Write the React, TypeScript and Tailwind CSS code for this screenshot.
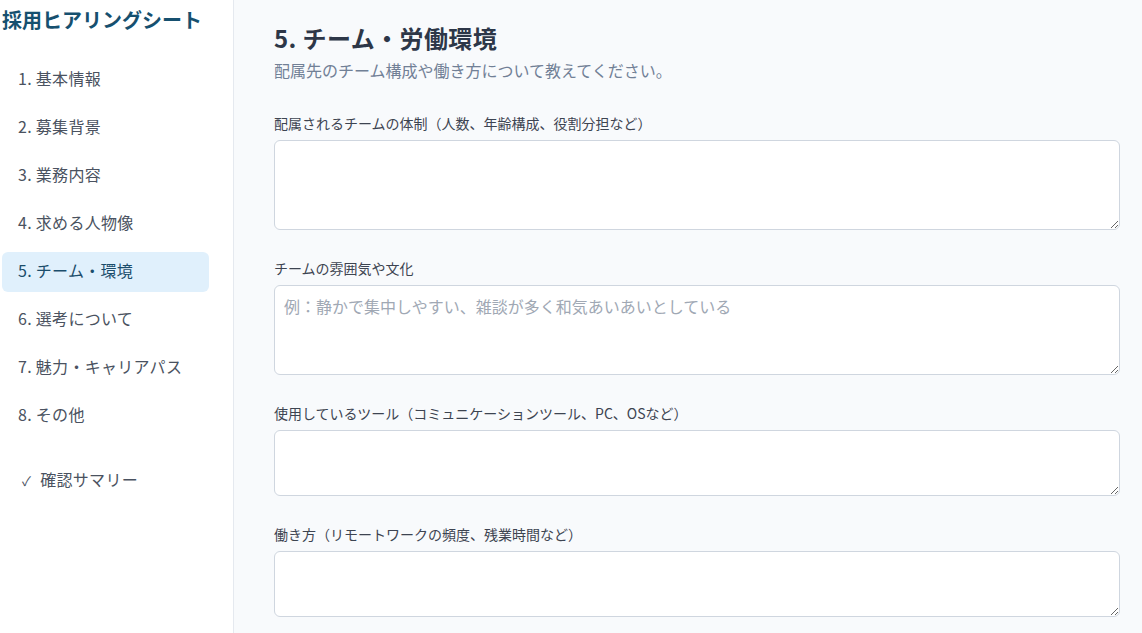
import { useState } from "react";

const sections = [
  "1. 基本情報",
  "2. 募集背景",
  "3. 業務内容",
  "4. 求める人物像",
  "5. チーム・環境",
  "6. 選考について",
  "7. 魅力・キャリアパス",
  "8. その他",
];

const fields = [
  { label: "配属されるチームの体制（人数、年齢構成、役割分担など）", placeholder: "", h: "h-[90px]" },
  { label: "チームの雰囲気や文化", placeholder: "例：静かで集中しやすい、雑談が多く和気あいあいとしている", h: "h-[90px]" },
  { label: "使用しているツール（コミュニケーションツール、PC、OSなど）", placeholder: "", h: "h-[66px]" },
  { label: "働き方（リモートワークの頻度、残業時間など）", placeholder: "", h: "h-[66px]" },
];

export default function App() {
  const [active, setActive] = useState(4);

  return (
    <div
      className="flex h-[633px] w-full overflow-hidden bg-[#f8fafc]"
      style={{ fontFamily: '"Noto Sans CJK JP", "Noto Sans", sans-serif' }}
    >
      <aside className="w-[234px] shrink-0 border-r border-[#e5e9ef] bg-white pl-[2px] pr-[24px]">
        <h1 className="mt-[6px] text-[20px] font-bold leading-[28px] text-[#16506f]">採用ヒアリングシート</h1>
        <nav className="mt-[26px] flex flex-col gap-[8px]">
          {sections.map((s, i) => (
            <button
              key={s}
              onClick={() => setActive(i)}
              className={`h-[40px] rounded-[6px] pb-[5px] pl-[16px] text-left text-[16px] tracking-[0.3px] ${
                i === active ? "bg-[#e0f0fc] text-[#1b4d6b]" : "text-[#4a5260]"
              }`}
            >
              {s}
            </button>
          ))}
          <button className="mt-[17px] h-[40px] pb-[5px] pl-[20px] text-left text-[16px] tracking-[0.3px] text-[#4a5260]">
            <span className="mr-[9px] text-[13px]">✓</span>確認サマリー
          </button>
        </nav>
      </aside>

      <main className="flex-1 pl-[40px] pr-[22px] pt-[22px]">
        <h2 className="text-[24px] font-bold leading-[32px] tracking-[0.4px] text-[#2d3748]">5. チーム・労働環境</h2>
        <p className="mt-[5px] text-[16px] leading-[22px] text-[#718096]">配属先のチーム構成や働き方について教えてください。</p>

        <div className="mt-[32px] flex flex-col gap-[28px]">
          {fields.map((f) => (
            <label key={f.label} className="flex flex-col gap-[7px]">
              <span className="text-[14px] leading-[20px] text-[#3d4451]">{f.label}</span>
              <textarea
                placeholder={f.placeholder}
                className={`${f.h} w-full rounded-[6px] border border-[#cfd6df] bg-white px-[9px] py-[8px] text-[16px] leading-[24px] text-[#2d3748] placeholder:text-[#a0a8b4] focus:outline-none`}
              />
            </label>
          ))}
        </div>
      </main>
    </div>
  );
}
